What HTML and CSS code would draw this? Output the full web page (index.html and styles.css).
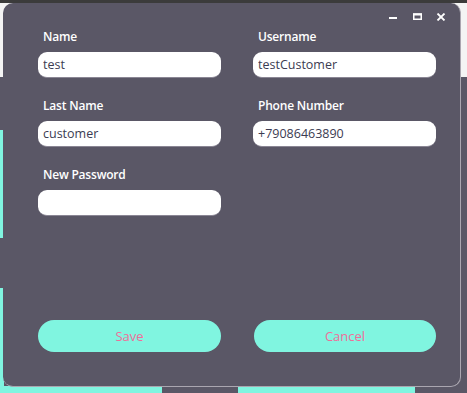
FILE: index.html
```html
<!DOCTYPE html>
<html lang="en">
<head>
    <meta charset="UTF-8"/>
    <title>Edit Customer</title>
    <link rel="stylesheet" href="styles.css">
</head>
<body>
<div class="dialog">
    <div class="title-bar">
        <button class="win-btn" type="button" title="Minimize">
            <svg width="10" height="8" viewBox="0 0 10 8"><rect x="1" y="4" width="8" height="2" fill="#fff"/></svg>
        </button>
        <button class="win-btn" type="button" title="Maximize">
            <svg width="11" height="8" viewBox="0 0 11 8"><rect x="1.75" y="1" width="7.5" height="5.25" fill="none" stroke="#fff" stroke-width="1.5"/><rect x="1" y="0.5" width="9" height="2" fill="#fff"/></svg>
        </button>
        <button class="win-btn" type="button" title="Close">
            <svg width="10" height="8" viewBox="0 0 10 8"><path d="M1.5 0.5 L8.5 7.5 M8.5 0.5 L1.5 7.5" stroke="#fff" stroke-width="1.8"/></svg>
        </button>
    </div>

    <div class="form">
        <div class="field">
            <label for="name">Name</label>
            <input id="name" type="text" value="test" autofocus/>
        </div>
        <div class="field">
            <label for="username">Username</label>
            <input id="username" type="text" value="testCustomer"/>
        </div>
        <div class="field">
            <label for="last-name">Last Name</label>
            <input id="last-name" type="text" value="customer"/>
        </div>
        <div class="field">
            <label for="phone">Phone Number</label>
            <input id="phone" type="text" value="+79086463890"/>
        </div>
        <div class="field">
            <label for="password">New Password</label>
            <input id="password" type="password"/>
        </div>
    </div>

    <div class="actions">
        <button class="action-btn" type="button">Save</button>
        <button class="action-btn" type="button">Cancel</button>
    </div>
</div>
</body>
</html>
```

FILE: styles.css
```css
html, body {
    height: 100%;
}

body {
    margin: 0;
    padding: 3px 0 0 3px;
    box-sizing: border-box;
    font-family: "Open Sans", "Noto Sans", sans-serif;
    background-color: #5a5766;
    background-image:
        linear-gradient(#3b3b3b, #3b3b3b),
        linear-gradient(#f4f4f4, #f4f4f4),
        linear-gradient(#80f5e0, #80f5e0),
        linear-gradient(#80f5e0, #80f5e0),
        linear-gradient(#80f5e0, #80f5e0),
        linear-gradient(#80f5e0, #80f5e0);
    background-repeat: no-repeat;
    background-size:
        100% 3px,
        100% 77px,
        4px 108px,
        4px 105px,
        162px 8px,
        177px 8px;
    background-position:
        0 0,
        0 0,
        0 130px,
        0 288px,
        0 386px,
        238px 386px;
    overflow: hidden;
}

.dialog {
    width: 458px;
    height: 384px;
    box-sizing: border-box;
    background-color: #5a5766;
    border-radius: 10px;
    border-right: 1px solid #aaa6b0;
    border-bottom: 1px solid #aaa6b0;
    padding: 0 25px 0 35px;
    display: flex;
    flex-direction: column;
}

.title-bar {
    display: flex;
    justify-content: flex-end;
    align-items: flex-start;
    gap: 13px;
    height: 26px;
    padding-top: 10px;
    box-sizing: border-box;
    margin-right: -12px;
}

.win-btn {
    border: none;
    background: none;
    padding: 0;
    width: 11px;
    height: 8px;
    display: flex;
    cursor: pointer;
}

.form {
    display: grid;
    grid-template-columns: 183px 183px;
    column-gap: 32px;
    row-gap: 20px;
}

.field {
    display: flex;
    flex-direction: column;
}

.field label {
    color: #fff;
    font-size: 12px;
    font-weight: 600;
    letter-spacing: -0.2px;
    line-height: 16px;
    padding-left: 5px;
    margin-bottom: 7px;
}

.field input {
    height: 26px;
    box-sizing: border-box;
    border: none;
    border-bottom: 1px solid #8a8694;
    border-radius: 9px;
    background-color: #fff;
    padding: 0 5px;
    font-family: inherit;
    font-size: 12.5px;
    color: #3c3c52;
    caret-color: #222;
    outline: none;
}

.actions {
    display: grid;
    grid-template-columns: 183px 182px;
    column-gap: 33px;
    margin-top: 104px;
}

.action-btn {
    height: 32px;
    border: none;
    border-radius: 16px;
    background-color: #80f5e0;
    color: #ee6f9a;
    font-family: inherit;
    font-size: 13px;
    cursor: pointer;
}
```
